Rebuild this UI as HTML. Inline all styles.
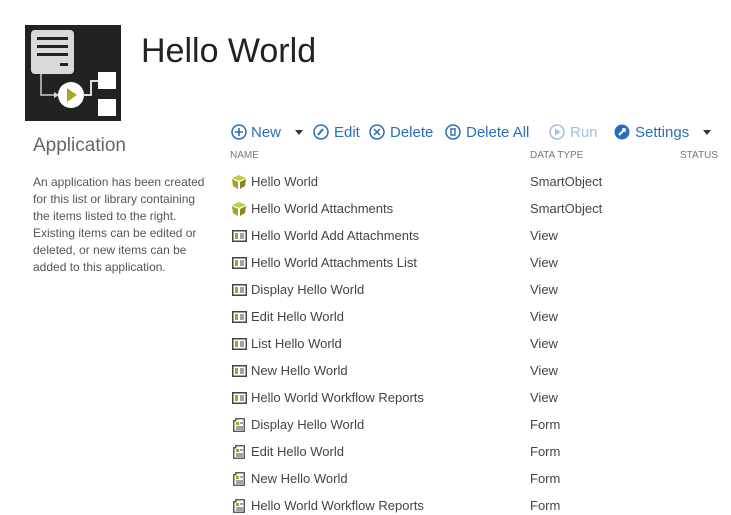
<!DOCTYPE html>
<html><head><style>
body{margin:0;width:731px;height:515px;background:#fff;font-family:"Liberation Sans",sans-serif;color:#444;position:relative;overflow:hidden}
.a{position:absolute;white-space:nowrap}
.tb{font-size:15px;color:#2a6ebb;top:124px}
.hd{font-size:10px;color:#777;top:150px}
.r{font-size:13px;color:#444}
.ic{position:absolute}
</style></head><body>
<svg class="ic" style="left:25px;top:25px" width="96" height="96" viewBox="0 0 96 96">
<rect width="96" height="96" fill="#222"/>
<rect x="6" y="5" width="43" height="44" rx="4" fill="#d9d9d9"/>
<rect x="12" y="12" width="31" height="3" fill="#222"/><rect x="12" y="20" width="31" height="3" fill="#222"/><rect x="12" y="28" width="31" height="3" fill="#222"/><rect x="35" y="38" width="8" height="3" fill="#222"/>
<polyline points="16,49 16,70 30,70" fill="none" stroke="#ccc" stroke-width="1.5"/>
<polygon points="29,67 34,70 29,73" fill="#ddd"/>
<circle cx="46" cy="70" r="13" fill="#fff"/><polygon points="42,63 52,70 42,77" fill="#a6a81f"/>
<polyline points="59,70 66,70 66,56 73,56 M66,70 66,83 73,83" fill="none" stroke="#ddd" stroke-width="2"/>
<rect x="73" y="47" width="18" height="17" fill="#fff"/><rect x="73" y="74" width="18" height="17" fill="#fff"/>
</svg>
<div class="a" style="left:141px;top:32px;font-size:34px;color:#222;font-weight:300">Hello World</div>
<div class="a" style="left:33px;top:135px;font-size:19px;color:#666">Application</div>
<div class="a" style="left:33px;top:174px;font-size:12px;line-height:17px;color:#555;white-space:normal;width:182px">An application has been created for this list or library containing the items listed to the right. Existing items can be edited or deleted, or new items can be added to this application.</div>

<svg class="ic" style="left:231px;top:124px" width="16" height="16"><circle cx="8" cy="8" r="7" fill="none" stroke="#2a6ebb" stroke-width="1.5"/><path d="M8 4v8M4 8h8" stroke="#2a6ebb" stroke-width="1.6"/></svg>
<div class="a tb" style="left:251px">New</div>
<div class="a" style="left:295px;top:130px;border:4px solid transparent;border-top:5px solid #333"></div>
<svg class="ic" style="left:313px;top:124px" width="16" height="16"><circle cx="8" cy="8" r="7" fill="none" stroke="#2a6ebb" stroke-width="1.5"/><path d="M5 11l5-6" stroke="#2a6ebb" stroke-width="2"/></svg>
<div class="a tb" style="left:334px">Edit</div>
<svg class="ic" style="left:369px;top:124px" width="16" height="16"><circle cx="8" cy="8" r="7" fill="none" stroke="#2a6ebb" stroke-width="1.5"/><path d="M5 5l6 6M11 5l-6 6" stroke="#2a6ebb" stroke-width="1.5"/></svg>
<div class="a tb" style="left:390px">Delete</div>
<svg class="ic" style="left:445px;top:124px" width="16" height="16"><circle cx="8" cy="8" r="7" fill="none" stroke="#2a6ebb" stroke-width="1.5"/><path d="M5 5h6M6 6v5h4V6" fill="none" stroke="#2a6ebb" stroke-width="1.4"/></svg>
<div class="a tb" style="left:466px">Delete All</div>
<svg class="ic" style="left:549px;top:124px" width="16" height="16"><circle cx="8" cy="8" r="7" fill="none" stroke="#9dc0e4" stroke-width="1.5"/><polygon points="6,4.5 11.5,8 6,11.5" fill="#9dc0e4"/></svg>
<div class="a tb" style="left:570px;color:#9dc0e4">Run</div>
<svg class="ic" style="left:614px;top:124px" width="16" height="16"><circle cx="8" cy="8" r="7.5" fill="#2a6ebb"/><path d="M5 11l4-4" stroke="#fff" stroke-width="2"/><circle cx="10" cy="6" r="2" fill="#fff"/></svg>
<div class="a tb" style="left:635px">Settings</div>
<div class="a" style="left:703px;top:130px;border:4px solid transparent;border-top:5px solid #333"></div>

<div class="a hd" style="left:230px">NAME</div>
<div class="a hd" style="left:530px">DATA TYPE</div>
<div class="a hd" style="left:680px">STATUS</div>

<div id="rows"></div>
<script>
var d=[["c","Hello World","SmartObject"],["c","Hello World Attachments","SmartObject"],["v","Hello World Add Attachments","View"],["v","Hello World Attachments List","View"],["v","Display Hello World","View"],["v","Edit Hello World","View"],["v","List Hello World","View"],["v","New Hello World","View"],["v","Hello World Workflow Reports","View"],["f","Display Hello World","Form"],["f","Edit Hello World","Form"],["f","New Hello World","Form"],["f","Hello World Workflow Reports","Form"]];
var h="";
d.forEach(function(r,i){var y=174+i*27;var ic;
if(r[0]=="c")ic='<svg class="ic" style="left:232px;top:'+(y+1)+'px" width="14" height="14"><polygon points="0,3 7,0 14,3 7,6" fill="#c8c84a"/><polygon points="0,4 6,7 6,14 1,11" fill="#a3a324"/><polygon points="14,4 8,7 8,14 13,11" fill="#8a8a1c"/></svg>';
else if(r[0]=="v")ic='<svg class="ic" style="left:232px;top:'+(y+2)+'px" width="15" height="12"><rect x="0.75" y="0.75" width="13.5" height="10.5" fill="none" stroke="#444" stroke-width="1.5"/><rect x="3" y="3" width="3" height="6" fill="#a3a324"/><path d="M8 4h4M8 6h4M8 8h4" stroke="#444"/></svg>';
else ic='<svg class="ic" style="left:233px;top:'+(y+1)+'px" width="12" height="14"><path d="M0.75 2.75h2v-2h8.5v12.5h-10.5z" fill="none" stroke="#444" stroke-width="1.3"/><rect x="3" y="4" width="3" height="3" fill="#a3a324"/><path d="M7 5h3M3 9h7M3 11h7" stroke="#444"/></svg>';
h+=ic+'<div class="a r" style="left:251px;top:'+y+'px">'+r[1]+'</div><div class="a r" style="left:530px;top:'+y+'px">'+r[2]+'</div>';});
document.getElementById("rows").innerHTML=h;
</script>
</body></html>
